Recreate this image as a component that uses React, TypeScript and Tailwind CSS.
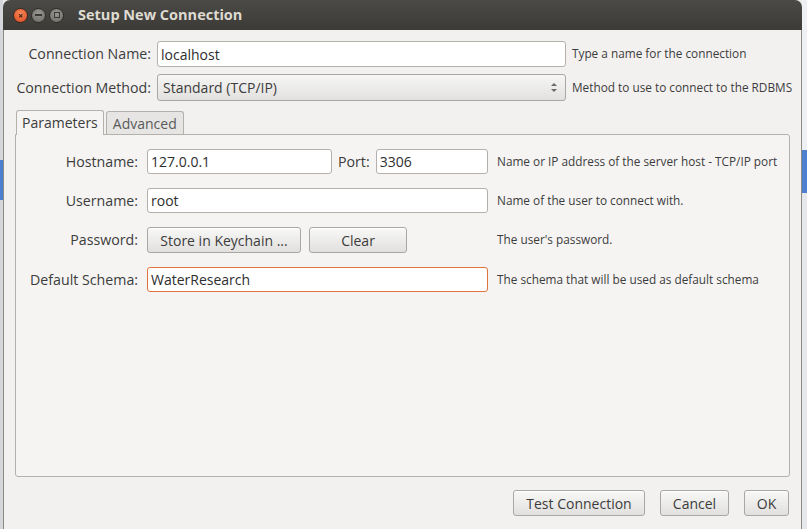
import { ReactNode } from 'react';

const font = { fontFamily: '"Open Sans", "Noto Sans", sans-serif' };

function Field({ value, className = '', focus = false }: { value: string; className?: string; focus?: boolean }) {
	return (
		<div
			className={`h-[25px] bg-white rounded-[3px] border flex items-center px-[3px] text-[14px] text-[#2e2e2e] ${
				focus ? 'border-[#e0723e]' : 'border-[#b4b1ac]'
			} ${className}`}
		>
			{value}
		</div>
	);
}

function Btn({ children, className = '' }: { children: ReactNode; className?: string }) {
	return (
		<div
			className={`h-[26px] rounded-[3px] border border-[#a9a7a3] bg-gradient-to-b from-[#f8f8f7] to-[#e1e0de] flex items-center justify-center text-[14px] text-[#3c3c3c] shadow-[inset_0_1px_0_#ffffff] ${className}`}
		>
			{children}
		</div>
	);
}

function Help({ children }: { children: ReactNode }) {
	return <span className="text-[11.8px] text-[#3c3c3c] whitespace-nowrap">{children}</span>;
}

function Label({ children }: { children: ReactNode }) {
	return <span className="text-[14.2px] text-[#3c3c3c] text-right whitespace-nowrap">{children}</span>;
}

function TitleBar() {
	return (
		<div className="h-[30px] shrink-0 rounded-t-[7px] bg-gradient-to-b from-[#4b4a46] to-[#3c3b37] flex items-center pl-[10px]">
			<div className="flex items-center gap-[3px]">
				<div className="w-[15px] h-[15px] rounded-full bg-[radial-gradient(circle_at_50%_35%,#f8895c,#d9481a)] border border-[#3a2a22] flex items-center justify-center text-[9px] leading-none text-[#3b1a0c] font-bold">
					×
				</div>
				<div className="w-[15px] h-[15px] rounded-full bg-[radial-gradient(circle_at_50%_35%,#9b9993,#6a6863)] border border-[#2f2e2b] flex items-center justify-center">
					<div className="w-[7px] h-[2px] bg-[#3a3935]" />
				</div>
				<div className="w-[15px] h-[15px] rounded-full bg-[radial-gradient(circle_at_50%_35%,#9b9993,#6a6863)] border border-[#2f2e2b] flex items-center justify-center">
					<div className="w-[6px] h-[6px] border-[1.5px] border-[#3a3935]" />
				</div>
			</div>
			<span className="ml-[14px] text-[14.5px] font-bold text-[#dfdbd2]">Setup New Connection</span>
		</div>
	);
}

export default function App() {
	return (
		<div className="w-[807px] h-[529px] flex bg-[#e9eaec] overflow-hidden" style={font}>
			<div className="w-[3px] flex flex-col shrink-0">
				<div className="h-[160px] bg-[#d4d6da]" />
				<div className="h-[40px] bg-[#4c7fd0]" />
				<div className="flex-1 bg-[#d4d6da]" />
			</div>

			<div className="w-[799px] h-full flex flex-col shrink-0">
				<TitleBar />
				<div className="flex-1 bg-[#f2f1f0] border-x border-[#8d8b86] flex flex-col pl-[11px] pr-[11px] pt-[11px] pb-[13px]">
					<div className="grid grid-cols-[136px_409px_1fr] gap-x-[6px] gap-y-[7px] items-center">
						<Label>Connection Name:</Label>
						<Field value="localhost" className="h-[26px]" />
						<Help>Type a name for the connection</Help>

						<Label>Connection Method:</Label>
						<div className="h-[27px] rounded-[3px] border border-[#a9a7a3] bg-gradient-to-b from-[#f6f6f5] to-[#e2e1df] flex items-center justify-between px-[5px] text-[14px] text-[#3c3c3c]">
							<span>Standard (TCP/IP)</span>
							<div className="flex flex-col items-center gap-[3px] pr-[3px]">
								<div className="w-0 h-0 border-x-[3px] border-x-transparent border-b-[3px] border-b-[#6a6a6a]" />
								<div className="w-0 h-0 border-x-[3px] border-x-transparent border-t-[3px] border-t-[#6a6a6a]" />
							</div>
						</div>
						<Help>Method to use to connect to the RDBMS</Help>
					</div>

					<div className="mt-[9px] flex items-end pl-[1px] gap-[2px] relative z-10">
						<div className="h-[25px] px-[5px] rounded-t-[3px] border border-b-0 border-[#b4b1ac] bg-[#f5f4f3] flex items-center text-[14px] text-[#3c3c3c] -mb-px pb-px">
							Parameters
						</div>
						<div className="h-[23px] px-[6px] rounded-t-[3px] border border-b-0 border-[#b4b1ac] bg-[#e6e5e3] flex items-center text-[14px] text-[#5a5a5a]">
							Advanced
						</div>
					</div>

					<div className="flex-1 bg-[#f5f4f3] border border-[#b4b1ac] rounded-b-[3px] rounded-tr-[3px] pt-[14px] pl-[14px]">
						<div className="grid grid-cols-[108px_341px_1fr] gap-x-[9px] gap-y-[14px] items-center">
							<Label>Hostname:</Label>
							<div className="flex items-center">
								<Field value="127.0.0.1" className="w-[185px]" />
								<span className="ml-[6px] text-[14.2px] text-[#3c3c3c]">Port:</span>
								<Field value="3306" className="ml-[6px] flex-1" />
							</div>
							<Help>Name or IP address of the server host - TCP/IP port</Help>

							<Label>Username:</Label>
							<Field value="root" />
							<Help>Name of the user to connect with.</Help>

							<Label>Password:</Label>
							<div className="flex gap-[8px]">
								<Btn className="w-[154px]">Store in Keychain ...</Btn>
								<Btn className="w-[98px]">Clear</Btn>
							</div>
							<Help>The user's password.</Help>

							<Label>Default Schema:</Label>
							<Field value="WaterResearch" focus />
							<Help>The schema that will be used as default schema</Help>
						</div>
					</div>

					<div className="mt-[13px] flex justify-end gap-[15px] pr-[1px]">
						<Btn className="w-[132px]">Test Connection</Btn>
						<Btn className="w-[69px]">Cancel</Btn>
						<Btn className="w-[45px]">OK</Btn>
					</div>
				</div>
			</div>

			<div className="w-[5px] flex flex-col shrink-0">
				<div className="h-[150px] bg-[#eef0f3]" />
				<div className="h-[43px] bg-[#4f7fcf]" />
				<div className="flex-1 bg-[#e6e8eb]" />
			</div>
		</div>
	);
}
